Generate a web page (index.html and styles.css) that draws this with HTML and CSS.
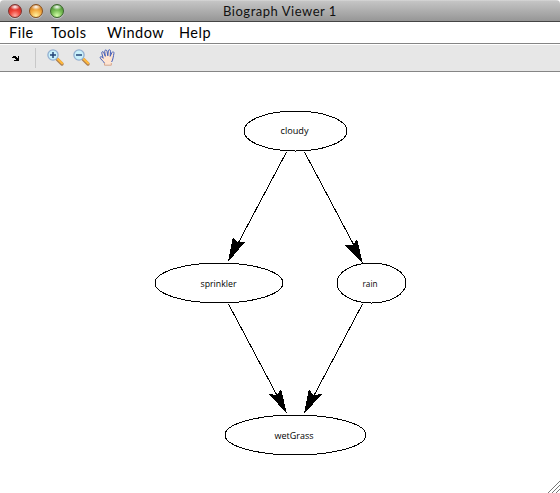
FILE: index.html
```html
<!DOCTYPE html>
<html lang="en">
<head>
<meta charset="utf-8">
<title>Biograph Viewer 1</title>
<link rel="stylesheet" href="styles.css">
</head>
<body>
<main class="window">
  <header class="titlebar">
    <div class="lights"><i class="light red"></i><i class="light amber"></i><i class="light green"></i></div>
    <h1 class="title">Biograph Viewer 1</h1>
    <div></div>
  </header>
  <nav class="menubar"><span class="file">File</span><span class="tools">Tools</span><span class="win">Window</span><span class="help">Help</span></nav>
  <div class="toolbar">
    <svg class="dock" width="8" height="6" viewBox="0 0 8 6" shape-rendering="crispEdges"><path d="M0 1h1V0h3v1h1v1h1V0h1v5H2V4h2V3H3V2H0z"/></svg>
    <span class="divider"></span>
    <svg class="tool" width="18" height="18" viewBox="0 0 18 18">
      <path d="M10.200 10.200 15 15" stroke="#ad8053" stroke-width="3.4" stroke-linecap="round"/>
      <path d="m10.500 9.800 4.600 4.500" stroke="#ffb83d" stroke-width="2.300" stroke-linecap="round"/>
      <circle cx="6" cy="6" r="5.100" fill="#c9f1fb" stroke="#93afd0" stroke-width="1.300"/>
      <path d="M3 6h6M6 3v6" stroke="#244477" stroke-width="1.500"/>
    </svg>
    <svg class="tool" width="18" height="18" viewBox="0 0 18 18">
      <path d="M10.200 10.200 15 15" stroke="#ad8053" stroke-width="3.4" stroke-linecap="round"/>
      <path d="m10.500 9.800 4.600 4.500" stroke="#ffb83d" stroke-width="2.300" stroke-linecap="round"/>
      <circle cx="6" cy="6" r="5.100" fill="#c9f1fb" stroke="#93afd0" stroke-width="1.300"/>
      <path d="M3 6h6" stroke="#244477" stroke-width="1.500"/>
    </svg>
    <svg class="hand" width="18" height="18" viewBox="0 0 18 18">
      <path d="M5.500 15.500C5 12.500 1.200 10.300 1.200 8.500c0-1.400 1.700-1 3 .8L2.800 4.200c-.3-1.900 1.600-2.100 2.100-.4l1.400 3.500-.6-5c0-1.700 2-1.700 2.300 0l.8 4.500.5-5c.3-1.600 2.200-1.300 2.200.4l-.3 5.100 1.700-3.700c.8-1.500 2.400-.7 2 .9-.5 2.400-.9 6.400-2.300 8.500l-.3 2.700z" fill="#ffe4d0"/>
      <path d="M5.500 14.200C4.500 12 1.200 10.200 1.200 8.500c0-1.400 1.700-1 3 .8L2.800 4.200c-.3-1.900 1.600-2.100 2.100-.4l1.400 3.500-.6-5c0-1.700 2-1.700 2.300 0l.8 4.500.5-5c.3-1.600 2.200-1.300 2.200.4l-.3 5.100 1.700-3.700c.8-1.500 2.400-.7 2 .9-.5 2.400-.9 6.400-2.300 8.500" fill="none" stroke="#435fba" stroke-width="1"/>
      <path d="M5.500 14v2.200h6.800V14" fill="none" stroke="#d7a68a"/>
    </svg>
  </div>
  <section class="canvas">
    <svg class="graph" width="560" height="421" viewBox="0 72 560 421">
      <g class="outline" shape-rendering="crispEdges">
        <ellipse cx="295.500" cy="131" rx="51.500" ry="20"/>
        <ellipse cx="219" cy="283" rx="64" ry="20"/>
        <ellipse cx="371.500" cy="283" rx="34.500" ry="20"/>
        <ellipse cx="295.500" cy="435" rx="70.500" ry="20"/>
        <path d="M286.500 152 234 251M304.500 152 357 251M228.500 304 281 403M362.500 304 310 403"/>
      </g>
      <g shape-rendering="crispEdges">
        <path d="M228 262 233 237 237 242 245 242z"/>
        <path d="M363 264 345 245 353 245 357 239z"/>
        <path d="M287 414 269 394 277 395 281 389z"/>
        <path d="M304 414 309 389 313 395 322 394z"/>
      </g>
      <g class="labels">
        <text x="280.500" y="134" textLength="28" lengthAdjust="spacingAndGlyphs">cloudy</text>
        <text x="200.500" y="287" textLength="36" lengthAdjust="spacingAndGlyphs">sprinkler</text>
        <text x="362.500" y="287" textLength="15" lengthAdjust="spacingAndGlyphs">rain</text>
        <text x="274.500" y="439" textLength="39" lengthAdjust="spacingAndGlyphs">wetGrass</text>
      </g>
      <path class="grip" d="m548 493 12-12M552 493l8-8M556 493l4-4"/>
    </svg>
  </section>
</main>
</body>
</html>
```
FILE: styles.css
```css
* { box-sizing: border-box; }
body { margin: 0; background: #fff; font-family: "Lato", "Open Sans", sans-serif; }
.window { width: 560px; height: 493px; display: flex; flex-direction: column; overflow: hidden; }
.titlebar { height: 22px; display: grid; grid-template-columns: 1fr auto 1fr; align-items: center; border-bottom: 1px solid #444; border-radius: 4px 4px 0 0; background: linear-gradient(#dedede 0, #c5c5c5 1px, #969696 21px); }
.lights { display: flex; gap: 7px; padding-left: 8px; }
.light { width: 14px; height: 14px; border-radius: 50%; border: 1px solid #7b3530; box-shadow: 0 1px 0 #c5c5c5; }
.red { background: radial-gradient(ellipse 5px 3px at 50% 16%, #fff 0, #fff0 100%), radial-gradient(circle at 50% 88%, #ffaaa0 0, #f04438 42%, #ad1c19 100%); }
.amber { border-color: #87501d; background: radial-gradient(ellipse 5px 3px at 50% 16%, #fff 0, #fff0 100%), radial-gradient(circle at 50% 88%, #fff2a0 0, #f4ad43 45%, #b86416 100%); }
.green { border-color: #3a662b; background: radial-gradient(ellipse 5px 3px at 50% 16%, #fff 0, #fff0 100%), radial-gradient(circle at 50% 88%, #d4ffaa 0, #76bc53 45%, #367a25 100%); }
.title { margin: 0; font-size: 13px; font-weight: 400; line-height: 20px; letter-spacing: .52px; color: #111; }
.menubar { height: 22px; display: flex; gap: 19px; padding-left: 9px; border-bottom: 1px solid #858585; font-size: 14.5px; line-height: 21px; letter-spacing: .5px; color: #000; }
.file { width: 23px; }
.tools { width: 37px; }
.win { width: 53px; }
.toolbar { height: 28px; display: flex; align-items: center; border-top: 1px solid #fff; border-bottom: 1px solid #858585; background: #e7e7e7; }
.dock { margin: 1px 15px 0 12px; }
.divider { width: 1px; height: 20px; background: #c8c8c8; margin-right: 11px; }
.tool { margin-right: 8px; }
.canvas { flex: 1; }
.graph { display: block; }
.outline { fill: none; stroke: #000; stroke-width: 1; }
.labels { font-family: "Open Sans", sans-serif; font-size: 9px; fill: #000; }
.grip { fill: none; stroke: #777; stroke-width: 1; }
```
